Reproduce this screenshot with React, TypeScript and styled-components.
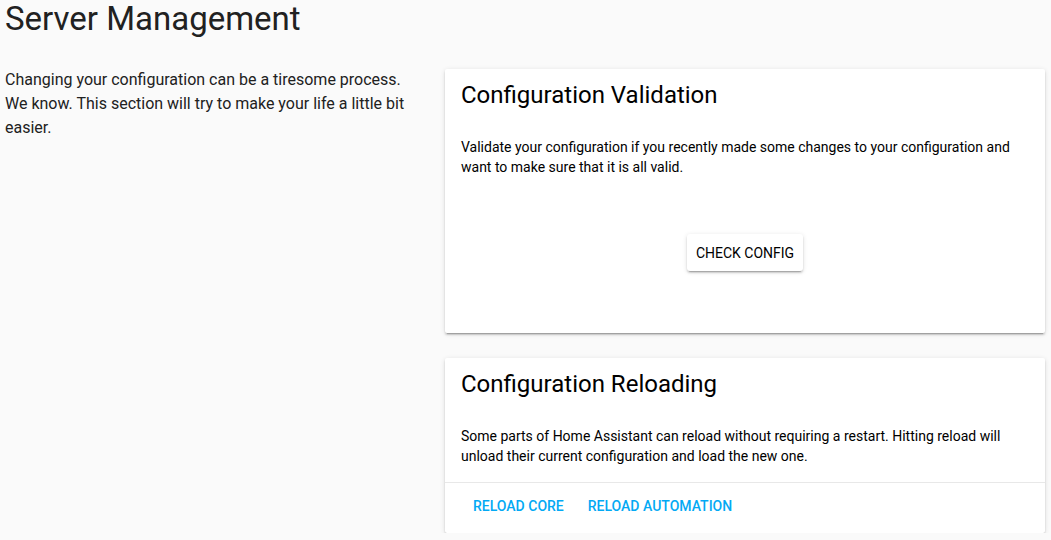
import React from "react";
import styled, { createGlobalStyle } from "styled-components";

const GlobalStyle = createGlobalStyle`
  html, body {
    margin: 0;
    padding: 0;
    background: #fafafa;
    font-family: Roboto, "Noto Sans", sans-serif;
    color: #212121;
  }
  * { box-sizing: border-box; }
`;

const Page = styled.div`
  padding: 0 6px 0 5px;
`;

const Title = styled.h1`
  margin: 0;
  font-size: 33px;
  font-weight: 400;
  line-height: 38px;
  color: #212121;
`;

const Layout = styled.div`
  display: grid;
  grid-template-columns: 1fr 600px;
  column-gap: 24px;
  margin-top: 30px;
`;

const Intro = styled.p`
  margin: 0;
  font-size: 16px;
  line-height: 24px;
  color: #212121;
`;

const Cards = styled.div`
  display: flex;
  flex-direction: column;
  gap: 25px;
  padding-top: 1px;
`;

const Card = styled.section`
  background: #fff;
  border-radius: 2px;
  box-shadow: 0 2px 2px 0 rgba(0, 0, 0, 0.14), 0 1px 5px 0 rgba(0, 0, 0, 0.12),
    0 3px 1px -2px rgba(0, 0, 0, 0.2);
`;

const CardHeader = styled.h2`
  margin: 0;
  padding: 10px 16px 0;
  font-size: 24px;
  font-weight: 400;
  line-height: 32px;
  color: #000;
`;

const CardContent = styled.div`
  padding: 26px 16px 16px;
  font-size: 14px;
  line-height: 20px;
  color: #000;
`;

const Center = styled.div`
  display: flex;
  justify-content: center;
  padding: 57px 0 46px;
`;

const RaisedButton = styled.button`
  height: 37px;
  padding: 0 9px;
  border: none;
  border-radius: 3px;
  background: #fff;
  font-family: inherit;
  font-size: 14px;
  font-weight: 400;
  text-transform: uppercase;
  color: #000;
  box-shadow: 0 2px 2px 0 rgba(0, 0, 0, 0.14), 0 1px 5px 0 rgba(0, 0, 0, 0.12),
    0 3px 1px -2px rgba(0, 0, 0, 0.2);
  cursor: pointer;
`;

const Actions = styled.div`
  display: flex;
  border-top: 1px solid #e8e8e8;
  padding: 5px 16px 9px;
`;

const FlatButton = styled.button`
  height: 36px;
  margin: 0 4px;
  padding: 0 8px;
  border: none;
  background: transparent;
  font-family: inherit;
  font-size: 14px;
  font-weight: 500;
  text-transform: uppercase;
  color: #03a9f4;
  cursor: pointer;
`;

export default function App() {
  return (
    <>
      <GlobalStyle />
      <Page>
        <Title>Server Management</Title>
        <Layout>
          <Intro>
            Changing your configuration can be a tiresome process. We know. This
            section will try to make your life a little bit easier.
          </Intro>
          <Cards>
            <Card>
              <CardHeader>Configuration Validation</CardHeader>
              <CardContent>
                Validate your configuration if you recently made some changes to
                your configuration and want to make sure that it is all valid.
                <Center>
                  <RaisedButton>Check Config</RaisedButton>
                </Center>
              </CardContent>
            </Card>
            <Card>
              <CardHeader>Configuration Reloading</CardHeader>
              <CardContent>
                Some parts of Home Assistant can reload without requiring a
                restart. Hitting reload will unload their current configuration
                and load the new one.
              </CardContent>
              <Actions>
                <FlatButton>Reload Core</FlatButton>
                <FlatButton>Reload Automation</FlatButton>
              </Actions>
            </Card>
          </Cards>
        </Layout>
      </Page>
    </>
  );
}
